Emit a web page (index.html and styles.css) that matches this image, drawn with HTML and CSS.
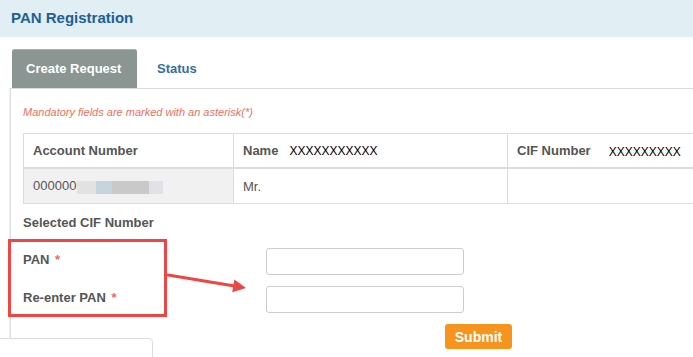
FILE: index.html
```html
<!DOCTYPE html>
<html>
<head>
<meta charset="utf-8">
<link rel="stylesheet" href="styles.css">
</head>
<body>
<div class="page">
  <div class="header">PAN Registration</div>
  <div class="wrap">
    <div class="tabs">
      <div class="tab active">Create Request</div>
      <div class="tab">Status</div>
    </div>
    <div class="panel">
      <div class="note">Mandatory fields are marked with an asterisk(*)</div>
      <div class="table-wrap">
        <table class="info">
          <colgroup><col class="c1"><col class="c2"><col class="c3"></colgroup>
          <tr class="head">
            <td><b>Account Number</b></td>
            <td><b>Name</b><span class="val name-val">XXXXXXXXXXX</span></td>
            <td><b>CIF Number</b><span class="val cif-val">XXXXXXXXX</span></td>
          </tr>
          <tr class="data">
            <td class="grey">000000<span class="blur"><span class="b1"></span><span class="b2"></span><span class="b3"></span><span class="b4"></span></span></td>
            <td>Mr.</td>
            <td></td>
          </tr>
        </table>
      </div>
      <div class="sel">Selected CIF Number</div>
      <div class="form">
        <label class="lbl">PAN <span class="req">*</span></label>
        <input class="inp" type="text">
        <label class="lbl">Re-enter PAN <span class="req">*</span></label>
        <input class="inp" type="text">
        <div></div>
        <div><button class="submit">Submit</button></div>
      </div>
    </div>
  </div>
  <div class="redbox"></div>
  <svg class="arrow" width="693" height="357" viewBox="0 0 693 357">
    <line x1="168" y1="275" x2="236" y2="286.3" stroke="#f04545" stroke-width="3" stroke-linecap="round"/>
    <polygon points="246,288 232.2,292.2 234.4,279.6" fill="#f04545"/>
  </svg>
  <div class="corner-box"></div>
</div>
</body>
</html>
```
FILE: styles.css
```css
html, body {
  margin: 0;
  padding: 0;
  background: #fff;
  overflow: hidden;
}
.page {
  position: relative;
  width: 693px;
  height: 357px;
  overflow: hidden;
  font-family: "Liberation Sans", Arial, sans-serif;
  color: #555;
}
.header {
  height: 37px;
  line-height: 35px;
  background: #e1eef4;
  color: #1f5e96;
  font-size: 15px;
  font-weight: bold;
  padding-left: 11px;
  box-sizing: border-box;
}
.wrap {
  padding-left: 10px;
  padding-top: 12px;
}
.tabs {
  display: flex;
  margin-left: 2px;
  height: 39px;
}
.tab {
  font-size: 13px;
  font-weight: bold;
  line-height: 39px;
  color: #326fa6;
  padding: 0 20px;
}
.tab.active {
  background: #8b9592;
  color: #fff;
  border-radius: 3px 3px 0 0;
  padding: 0 14px 0 14px;
  width: 97px;
  box-shadow: inset 0 1px 0 #a7afad;
}
.panel {
  border-top: 1px solid #dcdcdc;
  border-left: 1px solid #dedede;
  box-shadow: -1px 0 1px rgba(0,0,0,0.06);
  padding-left: 12px;
  height: 260px;
}
.note {
  font-size: 11px;
  font-style: italic;
  color: #f07060;
  padding-top: 16px;
  line-height: 14px;
  height: 14px;
}
.table-wrap {
  margin-top: 14px;
  width: 800px;
}
.info {
  border-collapse: collapse;
  table-layout: fixed;
  width: 784px;
  font-size: 13px;
}
.c1 { width: 210px; }
.c2 { width: 274px; }
.c3 { width: 300px; }
.info td {
  border: 1px solid #dddddd;
  padding: 0 9px;
  white-space: nowrap;
}
.head td {
  height: 33px;
  border-bottom: 2px solid #dddddd;
  color: #555;
}
.data td {
  height: 34px;
}
.info .grey { background: #f1f1f1; }
.val {
  color: #000;
  font-size: 12px;
}
.name-val { margin-left: 11px; }
.cif-val { margin-left: 18px; position: relative; top: 1px; }
.blur {
  display: inline-flex;
  vertical-align: middle;
  height: 13px;
  margin-left: 1px;
}
.blur span { display: block; height: 13px; }
.b1 { width: 19px; background: #e2e2e2; }
.b2 { width: 16px; background: #c6d4dd; }
.b3 { width: 37px; background: #c9c9c9; }
.b4 { width: 14px; background: #e1e1e7; }
.sel {
  font-size: 13px;
  font-weight: bold;
  line-height: 16px;
  margin-top: 11px;
}
.form {
  display: grid;
  grid-template-columns: 243px 198px;
  row-gap: 11px;
  margin-top: 17px;
  align-items: center;
}
.lbl {
  font-size: 13px;
  font-weight: bold;
  position: relative;
  top: -2px;
}
.req { color: #f06a5a; margin-left: 2px; }
.inp {
  width: 198px;
  height: 27px;
  box-sizing: border-box;
  border: 1px solid #cccccc;
  border-radius: 3px;
  margin: 0;
  padding: 0 6px;
}
.submit {
  margin-left: 179px;
  width: 67px;
  height: 25px;
  background: #f7941d;
  color: #fff;
  font-family: "Liberation Sans", Arial, sans-serif;
  font-weight: bold;
  font-size: 14px;
  border: none;
  border-radius: 3px;
  padding: 0;
}
.redbox {
  position: absolute;
  left: 8px;
  top: 239px;
  width: 153px;
  height: 72px;
  border: 3px solid #f04545;
}
.arrow {
  position: absolute;
  left: 0;
  top: 0;
  pointer-events: none;
}
.corner-box {
  position: absolute;
  left: -1px;
  top: 338px;
  width: 152px;
  height: 30px;
  background: #fff;
  border: 1px solid #dddddd;
  border-top-right-radius: 4px;
}
```
